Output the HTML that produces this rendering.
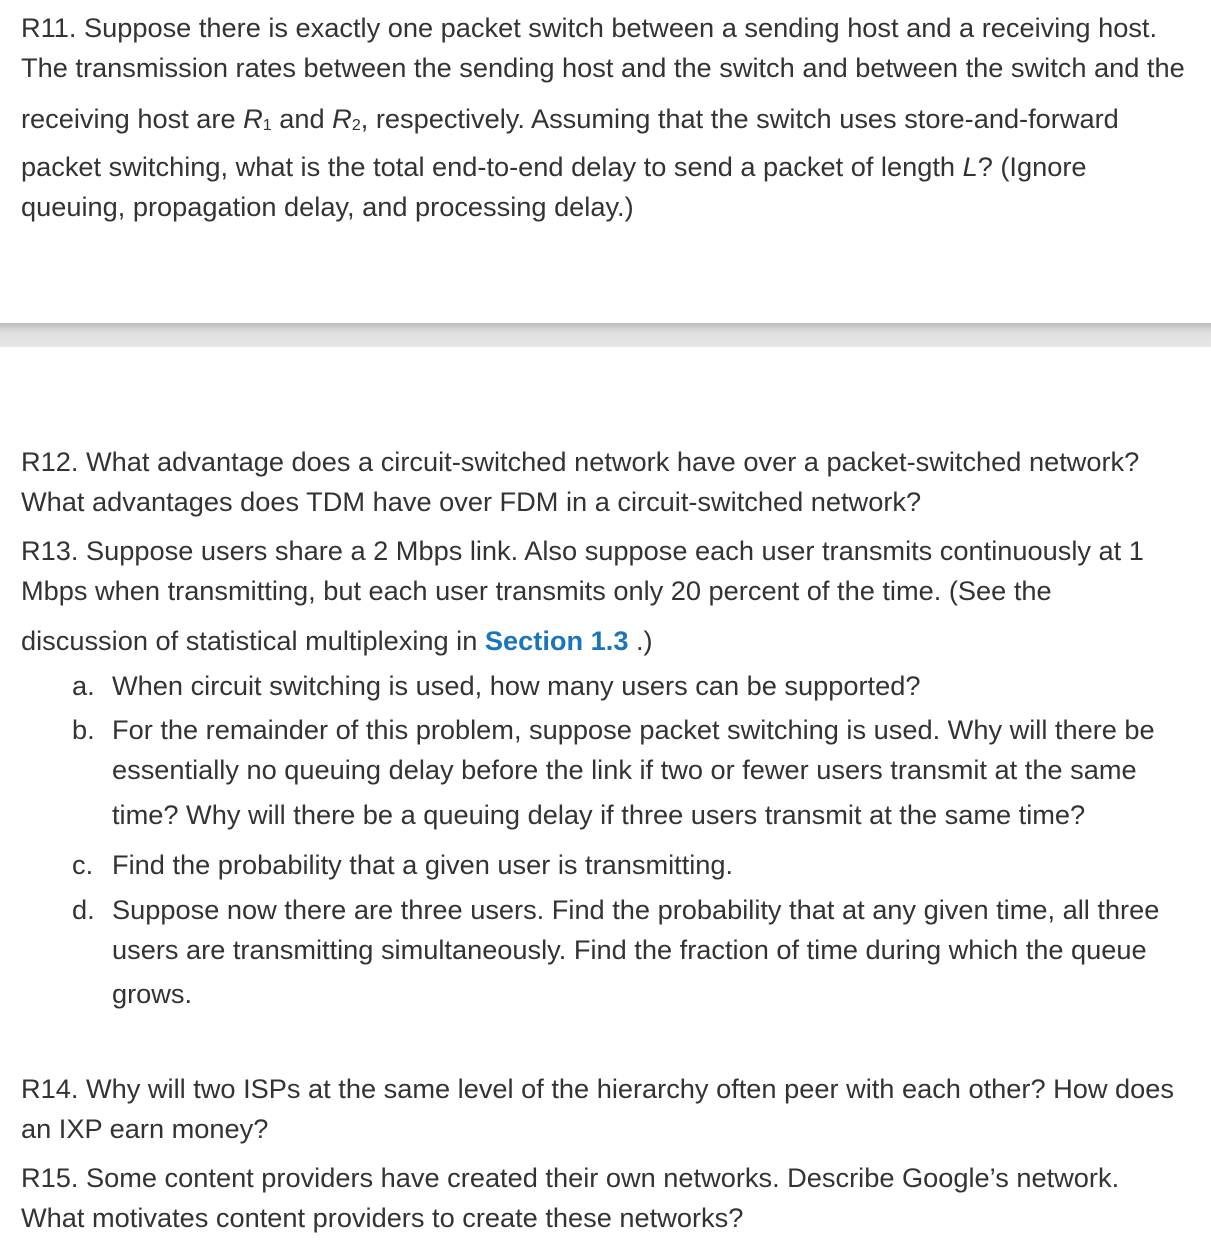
<!DOCTYPE html>
<html><head><meta charset="utf-8"><style>
body{margin:0;width:1211px;height:1251px;background:#fff;position:relative;overflow:hidden;font-family:"Liberation Sans",Arial,sans-serif;color:#333;font-size:27.2px;}
.l{position:absolute;left:21px;white-space:nowrap;line-height:30px;}
.i{left:112px}
.m{position:absolute;left:72px;line-height:30px}
sub{font-size:16px;vertical-align:baseline;position:relative;top:2px}
a{color:#1a75bb;font-weight:bold;text-decoration:none}
.bar{position:absolute;left:0;top:323px;width:1211px;height:24px;background:linear-gradient(#bdbdbd,#e0e0e0 40%,#e6e6e6);}
</style></head><body>
<div class="l" style="top:13px">R11. Suppose there is exactly one packet switch between a sending host and a receiving host.</div>
<div class="l" style="top:53px">The transmission rates between the sending host and the switch and between the switch and the</div>
<div class="l" style="top:104px">receiving host are <i>R</i><sub>1</sub> and <i>R</i><sub>2</sub>, respectively. Assuming that the switch uses store-and-forward</div>
<div class="l" style="top:152px">packet switching, what is the total end-to-end delay to send a packet of length <i>L</i>? (Ignore</div>
<div class="l" style="top:192px">queuing, propagation delay, and processing delay.)</div>
<div class="bar"></div>
<div class="l" style="top:447px">R12. What advantage does a circuit-switched network have over a packet-switched network?</div>
<div class="l" style="top:487px">What advantages does TDM have over FDM in a circuit-switched network?</div>
<div class="l" style="top:536px">R13. Suppose users share a 2 Mbps link. Also suppose each user transmits continuously at 1</div>
<div class="l" style="top:576px">Mbps when transmitting, but each user transmits only 20 percent of the time. (See the</div>
<div class="l" style="top:626px">discussion of statistical multiplexing in <a>Section 1.3</a> .)</div>
<div class="m" style="top:671px">a.</div><div class="l i" style="top:671px">When circuit switching is used, how many users can be supported?</div>
<div class="m" style="top:715px">b.</div><div class="l i" style="top:715px">For the remainder of this problem, suppose packet switching is used. Why will there be</div>
<div class="l i" style="top:755px">essentially no queuing delay before the link if two or fewer users transmit at the same</div>
<div class="l i" style="top:800px">time? Why will there be a queuing delay if three users transmit at the same time?</div>
<div class="m" style="top:850px">c.</div><div class="l i" style="top:850px">Find the probability that a given user is transmitting.</div>
<div class="m" style="top:895px">d.</div><div class="l i" style="top:895px">Suppose now there are three users. Find the probability that at any given time, all three</div>
<div class="l i" style="top:935px">users are transmitting simultaneously. Find the fraction of time during which the queue</div>
<div class="l i" style="top:979px">grows.</div>
<div class="l" style="top:1074px">R14. Why will two ISPs at the same level of the hierarchy often peer with each other? How does</div>
<div class="l" style="top:1114px">an IXP earn money?</div>
<div class="l" style="top:1163px">R15. Some content providers have created their own networks. Describe Google’s network.</div>
<div class="l" style="top:1203px">What motivates content providers to create these networks?</div>
</body></html>
